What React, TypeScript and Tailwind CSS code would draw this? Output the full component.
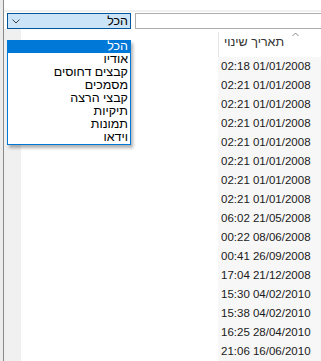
import React from "react"

const types = ["הכל", "אודיו", "קבצים דחוסים", "מסמכים", "קבצי הרצה", "תיקיות", "תמונות", "וידאו"]

const dates = [
  "02:18 01/01/2008",
  "02:21 01/01/2008",
  "02:21 01/01/2008",
  "02:21 01/01/2008",
  "02:21 01/01/2008",
  "02:21 01/01/2008",
  "02:21 01/01/2008",
  "02:21 01/01/2008",
  "06:02 21/05/2008",
  "00:22 08/06/2008",
  "00:41 26/09/2008",
  "17:04 21/12/2008",
  "15:30 04/02/2010",
  "15:38 04/02/2010",
  "16:25 28/04/2010",
  "21:06 16/06/2010",
]

const App = () => {
  return (
    <div className="relative flex w-[321px] h-[361px] overflow-hidden bg-white font-['Liberation_Sans',sans-serif] text-[11.5px] text-[#1a1a1a]">
      <div className="w-[3px] bg-[#ececec]" />
      <div className="w-px bg-[#8a8a8a]" />
      <div className="flex flex-col flex-1 min-w-0">
        <div className="h-[15px]" />
        <div className="h-[2px] bg-[#f0f0f0]" />
        <div className="h-[2px]" />
        {/* toolbar */}
        <div className="flex h-[21px]">
          <div className="ml-[3px] w-[124px] flex items-center justify-between border border-[#005499] bg-[#cce4f7] pl-[4px] pr-[2px]">
            <svg width="8" height="5" viewBox="0 0 8 5">
              <path d="M0.5 0.5 L4 4 L7.5 0.5" fill="none" stroke="#404040" strokeWidth="1" />
            </svg>
            <span dir="rtl" className="text-[12.5px] leading-[14px] text-black">הכל</span>
          </div>
          <div className="ml-[4px] flex-1 border border-r-0 border-[#adadad] bg-white" />
        </div>
        {/* content */}
        <div className="flex flex-1">
          <div className="w-[17px] bg-[#f0f0f0]" />
          <div className="flex-1" />
          <div className="w-[103px] flex flex-col">
            <div className="relative h-[28px] flex">
              <div className="mt-[3px] h-[25px] w-px bg-[#e5e5e5]" />
              <div className="pl-[5px] flex items-center pb-[1px] text-[12.5px] text-[#333]" dir="rtl">תאריך שינוי</div>
              <svg className="absolute left-[74px] top-[3px]" width="7" height="5" viewBox="0 0 7 5">
                <path d="M0.5 4 L3.5 1 L6.5 4" fill="none" stroke="#8a8a8a" strokeWidth="1" />
              </svg>
            </div>
            <div className="flex-1 bg-[#f7f7f7] pl-[3px]">
              {dates.map((d, i) => (
                <div key={i} className="h-[19px] leading-[19px] whitespace-nowrap">{d}</div>
              ))}
            </div>
          </div>
        </div>
      </div>
      {/* open dropdown */}
      <div className="absolute left-[7px] top-[40px] w-[124px] flex flex-col border border-t-0 border-[#0078d7] bg-white text-[12.5px] shadow-[2px_3px_3px_rgba(0,0,0,0.3)]">
        {types.map((t, i) => (
          <div
            key={t}
            dir="rtl"
            className={i === 0 ? "h-[13px] leading-[13px] pr-[2px] text-right bg-[#0078d7] text-white" : "h-[13px] leading-[13px] pr-[2px] text-right text-black"}
          >
            {t}
          </div>
        ))}
      </div>
    </div>
  )
}

export default App
